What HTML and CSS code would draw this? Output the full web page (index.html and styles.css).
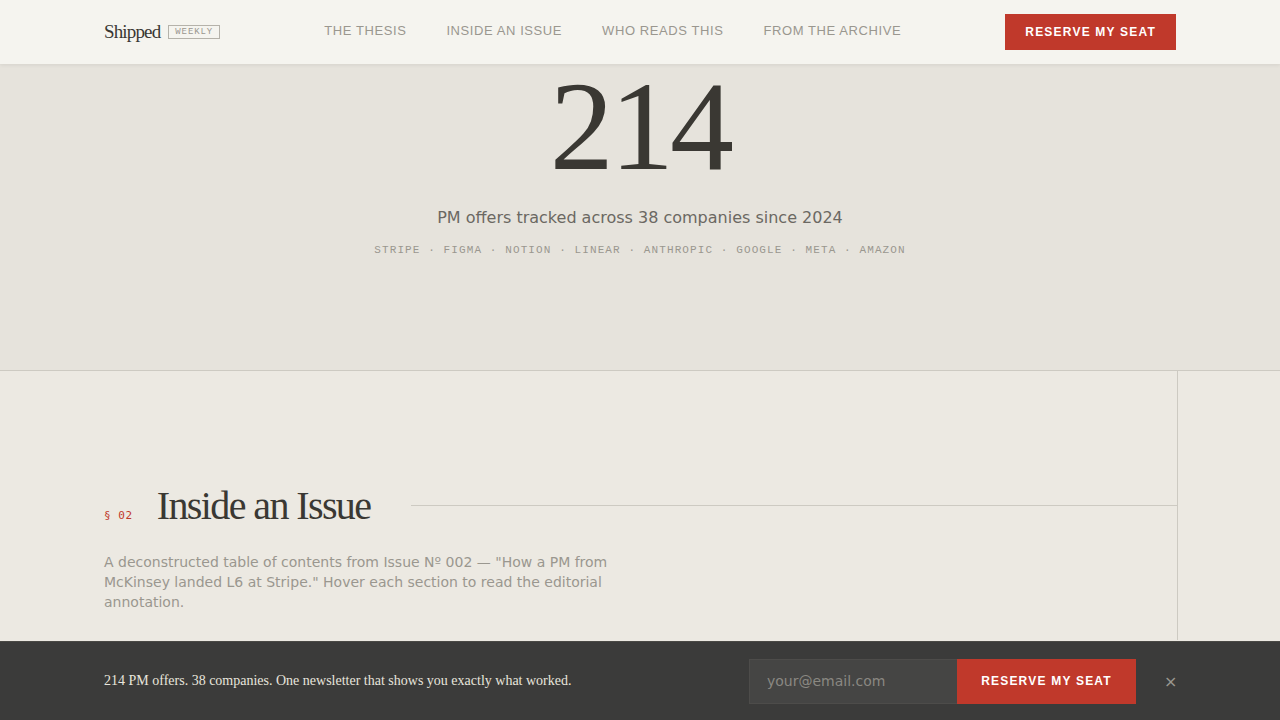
FILE: index.html
```html
<!DOCTYPE html>
<html lang="en">
<head>
    <meta charset="UTF-8">
    <meta name="viewport" content="width=device-width, initial-scale=1.0">
    <title>Shipped Weekly</title>
    <link rel="stylesheet" href="styles.css">
</head>
<body>
    <header class="topbar">
        <div class="wrap topbar-inner">
            <a class="logo" href="#">Shipped <span class="badge">WEEKLY</span></a>
            <nav class="nav">
                <a href="#thesis">THE THESIS</a>
                <a href="#issue">INSIDE AN ISSUE</a>
                <a href="#readers">WHO READS THIS</a>
                <a href="#archive">FROM THE ARCHIVE</a>
            </nav>
            <a class="btn" href="#signup">RESERVE MY SEAT</a>
        </div>
    </header>

    <section class="hero">
        <div class="big-number">214</div>
        <p class="hero-sub">PM offers tracked across 38 companies since 2024</p>
        <p class="hero-companies">STRIPE · FIGMA · NOTION · LINEAR · ANTHROPIC · GOOGLE · META · AMAZON</p>
    </section>

    <section class="issue" id="issue">
        <div class="issue-inner">
            <div class="section-head">
                <span class="section-num">§ 02</span>
                <h2>Inside an Issue</h2>
                <span class="rule"></span>
            </div>
            <p class="lede">A deconstructed table of contents from Issue Nº 002 — "How a PM from McKinsey landed L6 at Stripe." Hover each section to read the editorial annotation.</p>
        </div>
    </section>

    <div class="signup-bar" id="signup">
        <div class="wrap signup-inner">
            <p>214 PM offers. 38 companies. One newsletter that shows you exactly what worked.</p>
            <form class="signup-form" onsubmit="return false">
                <input type="email" placeholder="your@email.com">
                <button type="submit" class="btn btn-tall">RESERVE MY SEAT</button>
                <button type="button" class="close" aria-label="Close">×</button>
            </form>
        </div>
    </div>
</body>
</html>
```

FILE: styles.css
```css
body {
    margin: 0;
    padding: 0;
    font-family: "DejaVu Sans", sans-serif;
    background: #ece9e2;
    color: #3a3833;
    min-height: 720px;
}

a {
    text-decoration: none;
    color: inherit;
}

.wrap {
    width: 1072px;
    margin: 0 auto;
}

/* top navigation */
.topbar {
    position: relative;
    z-index: 2;
    height: 64px;
    background: #f5f4ef;
    box-shadow: 0 1px 4px rgba(0, 0, 0, 0.08);
}

.topbar-inner {
    height: 100%;
    display: flex;
    align-items: center;
}

.logo {
    display: flex;
    align-items: center;
    gap: 8px;
    font-family: "Liberation Serif", serif;
    font-size: 19px;
    letter-spacing: -0.045em;
    color: #3a3833;
}

.badge {
    font-family: "Liberation Mono", monospace;
    font-size: 9px;
    letter-spacing: 0.1em;
    color: #9a978f;
    border: 1px solid #b5b2aa;
    padding: 1px 6px 0;
    line-height: 11px;
}

.nav {
    flex: 1;
    display: flex;
    justify-content: center;
    gap: 40px;
    padding-bottom: 3px;
}

.nav a {
    font-family: "Liberation Sans", sans-serif;
    font-size: 13px;
    letter-spacing: 0.045em;
    color: #9a978f;
}

.btn {
    display: inline-flex;
    align-items: center;
    justify-content: center;
    height: 36px;
    padding: 0 20px;
    background: #c0392b;
    color: #fff;
    border: none;
    font-family: "Liberation Sans", sans-serif;
    font-weight: bold;
    font-size: 12px;
    letter-spacing: 0.1em;
    cursor: pointer;
}

/* hero counter */
.hero {
    height: 307px;
    box-sizing: border-box;
    padding-top: 8px;
    background: #e6e3dc;
    text-align: center;
    border-bottom: 1px solid #cdcac2;
}

.big-number {
    font-family: "Liberation Serif", serif;
    font-size: 128px;
    line-height: 0.85;
    letter-spacing: -0.03em;
    color: #3a3833;
}

.hero-sub {
    margin: 27px 0 0;
    font-size: 16px;
    color: #6b6862;
}

.hero-companies {
    margin: 17px 0 0;
    font-family: "Liberation Mono", monospace;
    font-size: 11px;
    letter-spacing: 0.1em;
    color: #9a978f;
}

/* issue section */
.issue {
    background: #ece9e2;
}

.issue-inner {
    width: 1074px;
    margin-left: calc(50% - 536px);
    height: 269px;
    box-sizing: border-box;
    padding-top: 112px;
    border-right: 1px solid #cdcac2;
}

.section-head {
    display: flex;
    align-items: center;
}

.section-num {
    font-family: "DejaVu Sans Mono", monospace;
    font-size: 11px;
    letter-spacing: 0.05em;
    color: #c0392b;
    margin-right: 24px;
    padding-top: 18px;
}

.section-head h2 {
    margin: 0;
    font-family: "Liberation Serif", serif;
    font-weight: normal;
    font-size: 40px;
    line-height: 46px;
    letter-spacing: -0.04em;
    color: #3a3833;
}

.rule {
    flex: 1;
    height: 1px;
    background: #cdcac2;
    margin-left: 41px;
    margin-top: -1px;
}

.lede {
    margin: 23px 0 0;
    max-width: 520px;
    font-size: 14px;
    line-height: 20px;
    color: #9a978f;
}

/* sticky signup bar */
.signup-bar {
    position: fixed;
    left: 0;
    right: 0;
    bottom: 0;
    height: 79px;
    background: #3b3b3a;
    border-top: 1px solid #4a4945;
    box-sizing: border-box;
}

.signup-inner {
    height: 100%;
    display: flex;
    align-items: center;
    justify-content: space-between;
}

.signup-inner p {
    margin: 0;
    font-family: "Liberation Serif", serif;
    font-size: 14px;
    color: #e8e5dd;
}

.signup-form {
    display: flex;
    align-items: center;
}

.signup-form input {
    width: 208px;
    height: 45px;
    box-sizing: border-box;
    padding: 0 17px;
    background: #454544;
    border: 1px solid #4d4c4a;
    border-right: none;
    color: #e8e5dd;
    font-family: "DejaVu Sans", sans-serif;
    font-size: 14px;
    outline: none;
}

.signup-form input::placeholder {
    color: #8a8882;
}

.btn-tall {
    height: 45px;
    width: 179px;
    padding: 0;
}

.close {
    margin-left: 28px;
    background: none;
    border: none;
    padding: 0;
    width: 12px;
    color: #9a978f;
    font-family: "DejaVu Sans", sans-serif;
    font-size: 16px;
    cursor: pointer;
}
```
